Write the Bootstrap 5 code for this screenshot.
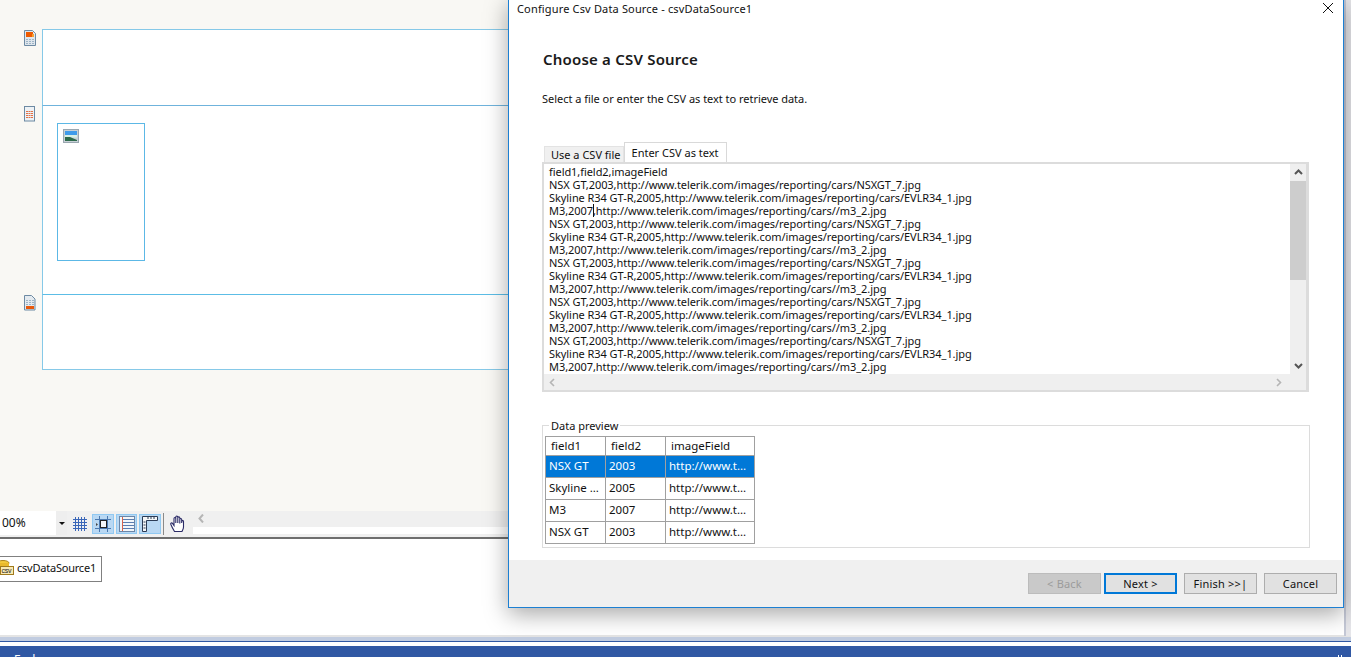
<!DOCTYPE html>
<html lang="en">
<head>
<meta charset="utf-8">
<title>Configure Csv Data Source</title>
<link href="https://cdn.jsdelivr.net/npm/bootstrap@5.3.0/dist/css/bootstrap.min.css" rel="stylesheet">
<style>
html,body{height:657px;overflow:hidden;}
body{font-family:"Noto Sans","Open Sans",sans-serif;font-size:11px;line-height:13px;color:#111;background:#fff;position:relative;}
.shell{height:657px;}
.designer{height:511px;background:#f9f8f4;padding-top:29px;}
.bandrow{display:flex;}
.gutter{width:42px;flex:none;padding-left:24px;padding-top:1px;}
.gutter svg{display:block;}
.band{flex:1;background:#fff;border-left:1px solid #86c9e8;border-top:1px solid #86c9e8;}
.band-a{height:76px;}
.band-b{height:189px;padding:17px 0 0 14px;border-top-color:#6fb3dc;}
.band-c{height:76px;border-top-color:#5cbde6;border-bottom:1px solid #86c9e8;}
.picbox{width:88px;height:138px;border:1px solid #5cb8e6;padding:5px;}
.picbox svg{display:block;}
.designbar{height:26px;background:#f0f0f0;}
.zoombox{width:67px;height:24px;background:#fff;font-size:12px;line-height:24px;margin-bottom:2px;padding-left:2px;position:relative;}
.zoomdrop{width:11px;background:#eee;margin-left:auto;}
.caretdown{width:0;height:0;border-left:3px solid transparent;border-right:3px solid transparent;border-top:3px solid #111;}
.gridicon{margin:0 5px 0 6px;}
.tb-on{width:22px;height:20px;background:#b9d8f3;border:1px solid #91c9f2;margin-right:2px;}
.tb-on.tb-mid{width:21px;}
.tbsep{width:1px;height:22px;background:#8a8a8a;margin:0 6px 0 0;}
.hscrolltrack{width:320px;height:26px;margin-left:5px;padding:3px 0 0 6px;}
.barwhite{height:7px;background:#fff;margin:13px 0 0 -5px;}
.darkline{height:2px;background:#6e6e6e;}
.tray{height:96px;background:#fff;padding-top:17px;}
.chip{width:103px;height:26px;margin-left:-1px;padding-bottom:2px;border:1px solid #808080;font-size:11px;line-height:22px;letter-spacing:-.22px;overflow:hidden;}
.chip svg{flex:none;}
.chip span{margin-left:2px;white-space:nowrap;}
.framea{height:2px;background:#e4e4e4;}
.frameb{height:4px;background:#c1cce0;}
.framec{height:1px;background:#2f57a3;}
.framed{height:4px;background:#fff;}
.statusbar{height:11px;background:#3058a4;color:#fff;font-size:12px;line-height:27px;padding-left:14px;overflow:hidden;}
.griplet{width:4px;height:2px;margin:9px 9px 0 0;border-left:1px solid #fff;border-right:1px solid #fff;}
.sidestrip{position:absolute;right:0;top:0;width:7px;height:636px;background:#e6e6ea;border-left:2px solid #c4c8d6;}
.wizard{position:absolute;left:508px;top:-2px;width:836px;height:610px;background:#fff;border:1px solid #1c7fd2;box-shadow:0 6px 22px rgba(0,0,0,.35);display:flex;flex-direction:column;}
.wiztitle{height:21px;padding:1px 0 0 8px;font-size:11px;line-height:17px;letter-spacing:.16px;position:relative;}
.wizclose{position:absolute;right:9px;top:3px;}
.wizhead{font-size:15px;line-height:20px;font-weight:600;letter-spacing:.2px;margin:29px 0 0 34px;color:#1a1a1a;}
.wizsub{margin:23px 0 0 33px;height:13px;letter-spacing:-.03px;}
.tabstrip{margin:37px 0 0 35px;height:20px;border:0;align-items:flex-end;}
.tabstrip .nav-link{font-size:11px;line-height:13px;color:#111;border-radius:0;padding:1px 2px 2px 6px;border:1px solid #e3e3e3;margin:0;background:#f0f0f0;height:16px;border-bottom:0;}
.tabstrip .nav-link.active{height:20px;background:#fff;border:1px solid #d9d9d9;border-bottom:0;padding:3px 7px;color:#111;}
.csvbox{margin:0 0 0 33px;width:767px;height:230px;border:2px solid #dcdcdc;border-right-width:3px;display:flex;flex-direction:column;}
.csvmain{display:flex;flex:1;min-height:0;}
.csvtext{flex:1;padding:1px 0 0 5px;white-space:nowrap;overflow:hidden;letter-spacing:-.0625px;}
.csvline{height:13px;}
.txtcaret{display:inline-block;width:0;height:13px;border-left:1px solid #111;vertical-align:top;margin-right:-1px;}
.vbar{width:16px;background:#efefef;display:flex;flex-direction:column;align-items:center;position:relative;}
.vthumb{width:100%;height:99px;background:#cdcdcd;margin-top:1px;}
.arrowbtn{height:16px;display:flex;align-items:center;justify-content:center;}
.hbar{height:16px;background:#efefef;display:flex;justify-content:space-between;align-items:center;padding:0 24px 0 5px;}
.previewset{margin:33px 0 0 33px;width:768px;height:123px;border:1px solid #dcdcdc;padding:0 0 0 2px;position:relative;}
.previewset legend{font-size:11px;line-height:13px;float:none;width:auto;margin:-7px 0 0 4px;padding:0 2px;background:#fff;position:absolute;color:#111;}
.previewtable{width:209px;table-layout:fixed;margin:10px 0 0 0;border-color:#a0a0a0;font-size:11.500px;line-height:13px;}
.previewtable th,.previewtable td{padding:3px 3px;border:1px solid #a0a0a0;font-weight:400;white-space:nowrap;overflow:hidden;text-overflow:ellipsis;color:#111;height:22px;background:#fff;box-shadow:none;}
.previewtable td:last-child{padding-right:5px;}
.previewtable th{height:19px;padding:1px 5px 3px;}
.previewtable tr.selrow td{background:#0078d7;color:#fff;}
.wizfoot{margin-top:auto;height:47px;background:#f0f0f0;padding:13px 6px 0 0;display:flex;justify-content:flex-end;}
.wizbtn{width:73px;height:21px;padding:0;font-size:11px;line-height:19px;border-radius:0;background:#e1e1e1;border:1px solid #adadad;color:#111;letter-spacing:.2px;margin-left:7px;}
.wizbtn:disabled{background:#c9c9c9;border-color:#bcbcbc;color:#9b9b9b;opacity:1;}
.wizbtn.nextbtn{border:2px solid #0078d7;line-height:17px;margin-left:3px;}
</style>
</head>
<body>
<div class="shell d-flex flex-column">
  <div class="designer">
    <div class="bandrow">
      <div class="gutter">
        <svg width="12" height="16" viewBox="0 0 12 16"><path d="M.5.5h8l3 3v12H.5z" fill="#dfe6ec" stroke="#6d8aa3"/><rect x="2" y="2" width="7" height="5" fill="#ee5a00"/><rect x="8" y="4" width="2" height="3" fill="#f5a033"/><path d="M2 9.500h8M2 11.500h8M2 13.500h8" stroke="#9db4c6" stroke-dasharray="2 1"/></svg>
      </div>
      <div class="band band-a"></div>
    </div>
    <div class="bandrow">
      <div class="gutter">
        <svg width="12" height="16" viewBox="0 0 12 16"><rect x=".5" y=".5" width="10" height="14.500" fill="#eef2f5" stroke="#6d8aa3"/><path d="M2 5.500h7M2 7.500h7M2 9.500h7M2 11.500h7" stroke="#e0501a" stroke-dasharray="2 .5" stroke-opacity=".8"/></svg>
      </div>
      <div class="band band-b">
        <div class="picbox">
          <svg width="16" height="14" viewBox="0 0 16 14"><rect x=".5" y=".5" width="15" height="13" fill="#c7d0d6" stroke="#9aa7b0"/><rect x="2" y="2" width="12" height="4" fill="#3f9bea"/><rect x="2" y="6" width="12" height="2.500" fill="#d8efe4"/><path d="M2 8h5l7 3v1H2z" fill="#2d6a4a"/></svg>
        </div>
      </div>
    </div>
    <div class="bandrow">
      <div class="gutter">
        <svg width="12" height="16" viewBox="0 0 12 16"><path d="M.5.5h7l3.500 3.500v11H.5z" fill="#e4eaef" stroke="#6d8aa3"/><path d="M2 5.500h8M2 7.500h8M2 9.500h8" stroke="#9db4c6" stroke-dasharray="2 1"/><rect x="2" y="11" width="8" height="3" fill="#e8590c"/></svg>
      </div>
      <div class="band band-c"></div>
    </div>
  </div>
  <div class="designbar d-flex align-items-center">
    <div class="zoombox d-flex">00%<div class="zoomdrop d-flex align-items-center justify-content-center"><div class="caretdown"></div></div></div>
    <svg class="gridicon" width="14" height="14" viewBox="0 0 14 14"><path d="M0 2.500h14M0 5.500h14M0 8.500h14M0 11.500h14M2.500 0v14M5.500 0v14M8.500 0v14M11.500 0v14" stroke="#3a66b8"/></svg>
    <div class="tb-on d-flex align-items-center justify-content-center">
      <svg width="16" height="16" viewBox="0 0 16 16"><path d="M0 3.500h16M0 12.500h16M4.500 0v16M12.500 0v16" stroke="#4a78b0"/><rect x="5.500" y="4.500" width="6" height="7" fill="#f4f6f8" stroke="#222"/><path d="M1 7l2 1.500L1 10z" fill="#444"/></svg>
    </div>
    <div class="tb-on tb-mid d-flex align-items-center justify-content-center">
      <svg width="16" height="16" viewBox="0 0 16 16"><rect x=".5" y=".5" width="15" height="15" fill="#f2f6fa" stroke="#6b86a8"/><path d="M4 3.500h11M4 6.500h11M4 9.500h11M4 12.500h11" stroke="#5a7db0"/><path d="M3.500 1v14" stroke="#d9624a"/></svg>
    </div>
    <div class="tb-on d-flex align-items-center justify-content-center">
      <svg width="16" height="16" viewBox="0 0 16 16"><path d="M.5.500h15v4h-11v11h-4z" fill="#f4f6f8" stroke="#2b3b55"/><path d="M6 1v2M9 1v2M12 1v2M1.500 6h2M1.500 9h2M1.500 12h2" stroke="#2b3b55"/></svg>
    </div>
    <div class="tbsep"></div>
    <svg width="17" height="18" viewBox="0 0 17 18"><path d="M4.500 16.500C3 14 1.500 11 .8 9.200c-.4-1.200 1-1.800 1.700-.8L4 10.500V3.500c0-1.300 1.800-1.300 1.800 0V8 2c0-1.300 2-1.300 2 0v6-5.200c0-1.300 2-1.300 2 0V8.500 4.500c0-1.300 1.900-1.300 1.900 0V8 6.500c0-1.200 1.800-1.200 1.800 0V12c0 2-.8 3-1.500 4.500z" fill="#fff" stroke="#2a2a66" stroke-width="1.100"/></svg>
    <div class="hscrolltrack d-flex flex-column">
      <svg width="7" height="9" viewBox="0 0 7 9" class="position-absolute"><path d="M5 .5L1.500 4.500 5 8.500" fill="none" stroke="#b5b5b5" stroke-width="2"/></svg>
      <div class="barwhite"></div>
    </div>
  </div>
  <div class="darkline"></div>
  <div class="tray">
    <div class="chip d-flex align-items-center">
      <svg width="15" height="16" viewBox="0 0 15 16"><ellipse cx="3" cy="3" rx="6" ry="2.500" fill="#f2c93c" stroke="#a9831c"/><rect x="-2" y="3" width="11" height="4" fill="#e9b92c"/><rect x=".5" y="6.500" width="13" height="8" fill="#f8e9b4" stroke="#a07a1c"/><text x="1.500" y="13" font-size="7" font-family="Liberation Sans" fill="#222">csv</text></svg>
      <span>csvDataSource1</span>
    </div>
  </div>
  <div class="framea"></div>
  <div class="frameb"></div>
  <div class="framec"></div>
  <div class="framed"></div>
  <div class="statusbar d-flex justify-content-between"><span>End</span><div class="griplet"></div></div>
</div>
<div class="sidestrip"></div>
<div class="wizard">
  <div class="wiztitle">Configure Csv Data Source - csvDataSource1
    <svg class="wizclose" width="12" height="12" viewBox="0 0 12 12"><path d="M1 1l10 10M11 1L1 11" stroke="#111"/></svg>
  </div>
  <div class="wizhead">Choose a CSV Source</div>
  <div class="wizsub">Select a file or enter the CSV as text to retrieve data.</div>
  <ul class="nav nav-tabs tabstrip">
    <li class="nav-item"><a class="nav-link" href="#">Use a CSV file</a></li>
    <li class="nav-item"><a class="nav-link active" href="#">Enter CSV as text</a></li>
  </ul>
  <div class="csvbox">
    <div class="csvmain">
      <div class="csvtext">
        <div class="csvline">field1,field2,imageField</div>
        <div class="csvline">NSX GT,2003,http://www.telerik.com/images/reporting/cars/NSXGT_7.jpg</div>
        <div class="csvline">Skyline R34 GT-R,2005,http://www.telerik.com/images/reporting/cars/EVLR34_1.jpg</div>
        <div class="csvline">M3,2007<span class="txtcaret"></span>,http://www.telerik.com/images/reporting/cars//m3_2.jpg</div>
        <div class="csvline">NSX GT,2003,http://www.telerik.com/images/reporting/cars/NSXGT_7.jpg</div>
        <div class="csvline">Skyline R34 GT-R,2005,http://www.telerik.com/images/reporting/cars/EVLR34_1.jpg</div>
        <div class="csvline">M3,2007,http://www.telerik.com/images/reporting/cars//m3_2.jpg</div>
        <div class="csvline">NSX GT,2003,http://www.telerik.com/images/reporting/cars/NSXGT_7.jpg</div>
        <div class="csvline">Skyline R34 GT-R,2005,http://www.telerik.com/images/reporting/cars/EVLR34_1.jpg</div>
        <div class="csvline">M3,2007,http://www.telerik.com/images/reporting/cars//m3_2.jpg</div>
        <div class="csvline">NSX GT,2003,http://www.telerik.com/images/reporting/cars/NSXGT_7.jpg</div>
        <div class="csvline">Skyline R34 GT-R,2005,http://www.telerik.com/images/reporting/cars/EVLR34_1.jpg</div>
        <div class="csvline">M3,2007,http://www.telerik.com/images/reporting/cars//m3_2.jpg</div>
        <div class="csvline">NSX GT,2003,http://www.telerik.com/images/reporting/cars/NSXGT_7.jpg</div>
        <div class="csvline">Skyline R34 GT-R,2005,http://www.telerik.com/images/reporting/cars/EVLR34_1.jpg</div>
        <div class="csvline">M3,2007,http://www.telerik.com/images/reporting/cars//m3_2.jpg</div>
      </div>
      <div class="vbar">
        <div class="arrowbtn"><svg width="9" height="6" viewBox="0 0 9 6"><path d="M1 5l3.500-3.500L8 5" fill="none" stroke="#555" stroke-width="2"/></svg></div>
        <div class="vthumb"></div>
        <div class="arrowbtn mt-auto"><svg width="9" height="6" viewBox="0 0 9 6"><path d="M1 1l3.500 3.500L8 1" fill="none" stroke="#555" stroke-width="2"/></svg></div>
      </div>
    </div>
    <div class="hbar">
      <svg width="6" height="9" viewBox="0 0 6 9"><path d="M5 1L1.500 4.500 5 8" fill="none" stroke="#b5b5b5" stroke-width="1.600"/></svg>
      <svg width="6" height="9" viewBox="0 0 6 9"><path d="M1 1l3.500 3.500L1 8" fill="none" stroke="#b5b5b5" stroke-width="1.600"/></svg>
    </div>
  </div>
  <fieldset class="previewset">
    <legend>Data preview</legend>
    <table class="table table-bordered previewtable">
      <colgroup><col style="width:60px"><col style="width:60px"><col style="width:89px"></colgroup>
      <thead><tr><th>field1</th><th>field2</th><th>imageField</th></tr></thead>
      <tbody>
        <tr class="selrow"><td>NSX GT</td><td>2003</td><td>http://www.telerik.com/images</td></tr>
        <tr><td>Skyline R34 GT-R</td><td>2005</td><td>http://www.telerik.com/images</td></tr>
        <tr><td>M3</td><td>2007</td><td>http://www.telerik.com/images</td></tr>
        <tr><td>NSX GT</td><td>2003</td><td>http://www.telerik.com/images</td></tr>
      </tbody>
    </table>
  </fieldset>
  <div class="wizfoot">
    <button class="btn wizbtn" disabled>&lt; Back</button>
    <button class="btn wizbtn nextbtn">Next &gt;</button>
    <button class="btn wizbtn">Finish &gt;&gt;|</button>
    <button class="btn wizbtn">Cancel</button>
  </div>
</div>
</body>
</html>
